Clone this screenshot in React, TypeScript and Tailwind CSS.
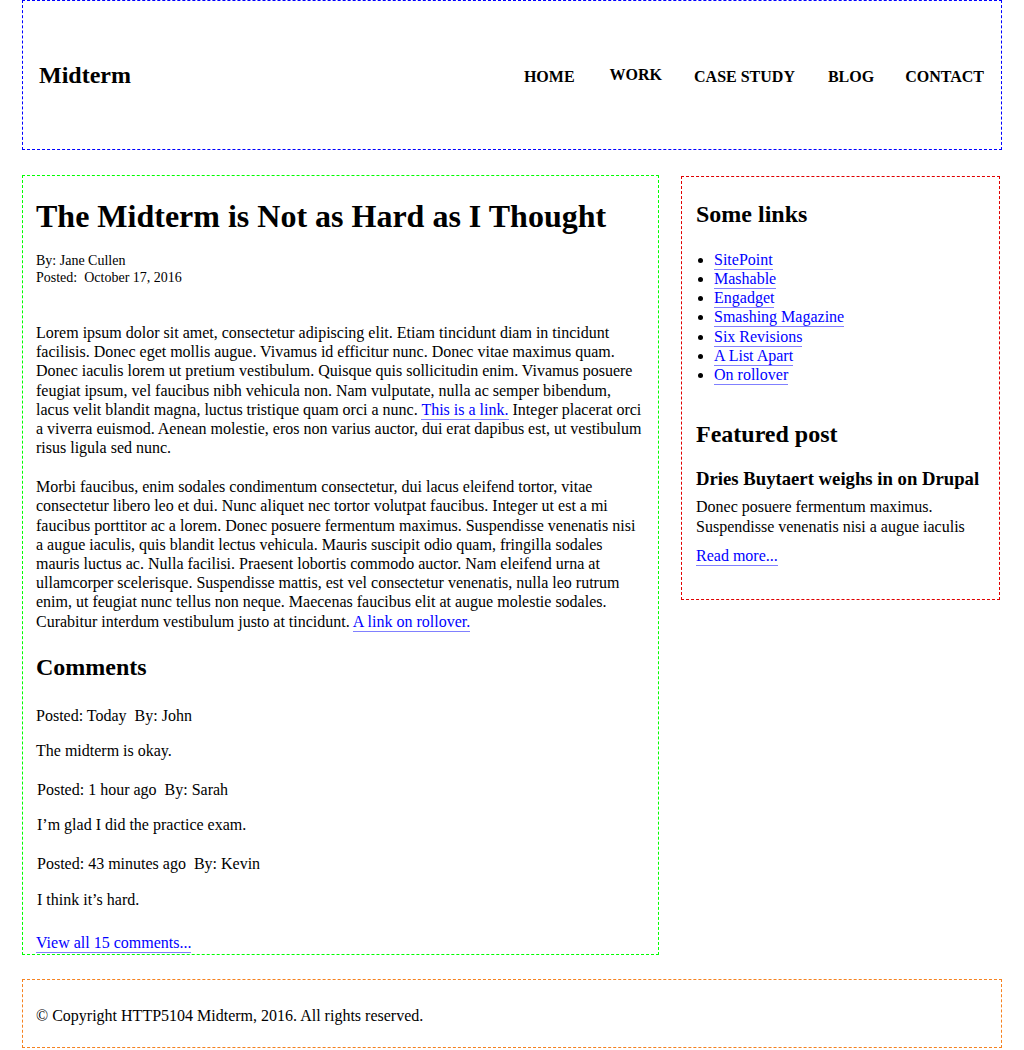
import React from "react";

const navItems = [
  { label: "HOME", cls: "" },
  { label: "WORK", cls: "ml-[35px] mb-[3px]" },
  { label: "CASE STUDY", cls: "ml-[32px]" },
  { label: "BLOG", cls: "ml-[33px]" },
  { label: "CONTACT", cls: "ml-[31px]" },
];

const sideLinks = [
  "SitePoint",
  "Mashable",
  "Engadget",
  "Smashing Magazine",
  "Six Revisions",
  "A List Apart",
  "On rollover",
];

const comments = [
  { when: "Today", who: "John", text: "The midterm is okay.", indent: false },
  { when: "1 hour ago", who: "Sarah", text: "I\u2019m glad I did the practice exam.", indent: true },
  { when: "43 minutes ago", who: "Kevin", text: "I think it\u2019s hard.", indent: true },
];

function Link({ children }: { children: React.ReactNode }) {
  return (
    <a href="#" className="text-[#0000ff] border-b border-[#8080ff] pb-px">
      {children}
    </a>
  );
}

export default function App() {
  return (
    <div className="font-['Liberation_Serif',serif] text-black text-[16px] leading-[1.2] bg-white min-h-[1050px]">
      <div className="w-[980px] mx-auto">
        <header className="h-[150px] border border-dashed border-[#0000ff] flex items-center justify-between pl-[16px] pr-[17px]">
          <h1 className="text-[24px] font-bold">Midterm</h1>
          <nav className="flex items-center mt-[3px]">
            {navItems.map((item) => (
              <a key={item.label} href="#" className={"text-[16px] font-bold " + item.cls}>
                {item.label}
              </a>
            ))}
          </nav>
        </header>

        <div className="flex items-start mt-[25px]">
          <main className="w-[637px] border border-dashed border-[#00ff00] pt-[21px] px-[13px] pb-[2px]">
            <h1 className="text-[32px] font-bold leading-[1.2]">
              The Midterm is Not as Hard as I Thought
            </h1>
            <div className="text-[14px] mt-[18px]">
              <p>By: Jane Cullen</p>
              <p>Posted:&nbsp; October 17, 2016</p>
            </div>
            <p className="mt-[36px]">
              Lorem ipsum dolor sit amet, consectetur adipiscing elit. Etiam tincidunt diam in tincidunt
              facilisis. Donec eget mollis augue. Vivamus id efficitur nunc. Donec vitae maximus quam.
              Donec iaculis lorem ut pretium vestibulum. Quisque quis sollicitudin enim. Vivamus posuere
              feugiat ipsum, vel faucibus nibh vehicula non. Nam vulputate, nulla ac semper bibendum,
              lacus velit blandit magna, luctus tristique quam orci a nunc. <Link>This is a link.</Link>{" "}
              Integer placerat orci a viverra euismod. Aenean molestie, eros non varius auctor, dui erat
              dapibus est, ut vestibulum risus ligula sed nunc.
            </p>
            <p className="mt-[20px]">
              Morbi faucibus, enim sodales condimentum consectetur, dui lacus eleifend tortor, vitae
              consectetur libero leo et dui. Nunc aliquet nec tortor volutpat faucibus. Integer ut est a mi
              faucibus porttitor ac a lorem. Donec posuere fermentum maximus. Suspendisse venenatis nisi
              a augue iaculis, quis blandit lectus vehicula. Mauris suscipit odio quam, fringilla sodales
              mauris luctus ac. Nulla facilisi. Praesent lobortis commodo auctor. Nam eleifend urna at
              ullamcorper scelerisque. Suspendisse mattis, est vel consectetur venenatis, nulla leo rutrum
              enim, ut feugiat nunc tellus non neque. Maecenas faucibus elit at augue molestie sodales.
              Curabitur interdum vestibulum justo at tincidunt. <Link>A link on rollover.</Link>
            </p>

            <h2 className="text-[24px] font-bold mt-[22px]">Comments</h2>
            <div className="mt-[24px]">
              {comments.map((c, i) => (
                <div key={c.who} className={(i > 0 ? "mt-[20px] " : "") + (c.indent ? "pl-px" : "")}>
                  <p>
                    Posted: {c.when}&nbsp; By: {c.who}
                  </p>
                  <p className="mt-[16px]">{c.text}</p>
                </div>
              ))}
            </div>
            <p className="mt-[24px]">
              <Link>View all 15 comments...</Link>
            </p>
          </main>

          <aside className="w-[319px] ml-[22px] mt-px border border-dashed border-[#e00000] pt-[23px] px-[14px] pb-[34px]">
            <h2 className="text-[24px] font-bold">Some links</h2>
            <ul className="list-disc pl-[18px] mt-[21px]">
              {sideLinks.map((l) => (
                <li key={l}>
                  <Link>{l}</Link>
                </li>
              ))}
            </ul>
            <h2 className="text-[24px] font-bold mt-[36px]">Featured post</h2>
            <h3 className="text-[18.72px] font-bold mt-[19px]">Dries Buytaert weighs in on Drupal</h3>
            <p className="mt-[7px]">
              Donec posuere fermentum maximus. Suspendisse venenatis nisi a augue iaculis
            </p>
            <p className="mt-[10px]">
              <Link>Read more...</Link>
            </p>
          </aside>
        </div>

        <footer className="mt-[24px] h-[69px] border border-dashed border-[#f58220] flex items-center px-[13px] pt-[4px]">
          <p>&copy; Copyright HTTP5104 Midterm, 2016. All rights reserved.</p>
        </footer>
      </div>
    </div>
  );
}
